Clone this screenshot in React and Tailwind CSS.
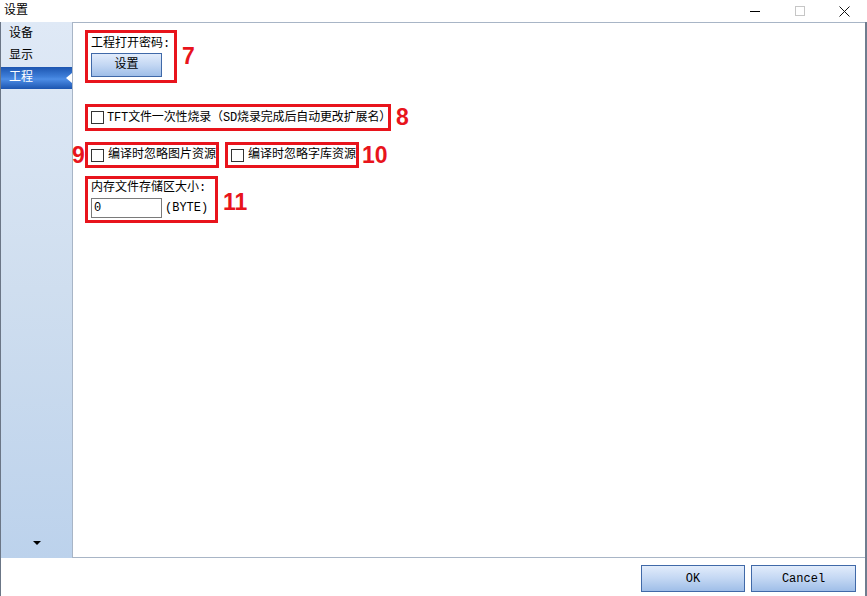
import React from "react";

const FONT = { fontFamily: '"Liberation Mono", "Noto Sans CJK SC", monospace' };

const NavItem = ({ label, active }) => {
  if (active) {
    return (
      <div className="relative h-[22px] flex items-center pl-[8px] text-white bg-[linear-gradient(180deg,#1c55b0_0%,#3f7fda_45%,#4d8de6_55%,#1c55b0_100%)]">
        {label}
        <div className="absolute right-0 top-[6px] w-0 h-0 border-y-[5px] border-y-transparent border-r-[6px] border-r-white" />
      </div>
    );
  }
  return <div className="h-[22px] flex items-center pl-[8px] text-black">{label}</div>;
};

const RedNum = ({ children, className = "" }) => (
  <span
    className={`text-[#e8141c] font-bold text-[23px] leading-none ${className}`}
    style={{ fontFamily: '"Liberation Sans", sans-serif' }}
  >
    {children}
  </span>
);

const Check = () => (
  <span className="inline-block w-[13px] h-[13px] border border-[#333] bg-white shrink-0" />
);

const BlueButton = ({ children, className = "" }) => (
  <button className={`border border-[#4069a8] bg-[linear-gradient(180deg,#e2ecfb_0%,#c3d7f3_50%,#9fbee8_100%)] text-black text-[12px] ${className}`}>
    {children}
  </button>
);

export default function App() {
  return (
    <div className="w-[867px] h-[596px] bg-white flex flex-col text-[12px] text-black overflow-hidden" style={FONT}>
      {/* title bar */}
      <div className="h-[22px] flex items-center shrink-0">
        <span className="pl-[4px] text-[12px]">设置</span>
        <div className="ml-auto flex items-center h-full">
          <div className="w-[45px] h-full flex items-center justify-center">
            <span className="block w-[10px] h-px bg-black" />
          </div>
          <div className="w-[45px] h-full flex items-center justify-center">
            <span className="block w-[10px] h-[10px] border border-[#c6c6c6]" />
          </div>
          <div className="w-[45px] h-full flex items-center justify-center">
            <svg width="11" height="11" viewBox="0 0 11 11">
              <path d="M0.5 0.5 L10.5 10.5 M10.5 0.5 L0.5 10.5" stroke="#111" strokeWidth="1" />
            </svg>
          </div>
        </div>
      </div>

      {/* body */}
      <div className="flex-1 flex flex-col border-l border-l-[#6b7686] border-r-2 border-r-[#6f7d8f]">
        <div className="flex-1 flex">
          {/* sidebar */}
          <div className="w-[71px] flex flex-col pt-[1px] bg-[linear-gradient(180deg,#dfe9f6_0%,#cfdeef_50%,#bcd2ec_100%)]">
            <NavItem label="设备" />
            <NavItem label="显示" />
            <NavItem label="工程" active />
            <div className="mt-auto h-[20px] flex items-start justify-center">
              <span className="block w-0 h-0 border-x-[4px] border-x-transparent border-t-[4px] border-t-black mt-[3px]" />
            </div>
          </div>

          {/* content panel */}
          <div className="flex-1 border-l border-t border-b border-[#a8b5c6] bg-white pl-[12px] pt-[7px] flex flex-col">
            {/* 7 */}
            <div className="flex items-start">
              <div className="w-[92px] h-[53px] border-[3px] border-[#e8141c] pl-[3px] pt-[4px] flex flex-col">
                <span className="leading-[14px]">工程打开密码:</span>
                <BlueButton className="mt-[2px] w-[71px] h-[24px]">设置</BlueButton>
              </div>
              <RedNum className="ml-[5px] mt-[15px]">7</RedNum>
            </div>

            {/* 8 */}
            <div className="flex items-center mt-[21px]">
              <div className="w-[306px] h-[27px] border-[3px] border-[#e8141c] flex items-center pl-[3px] gap-[3px]">
                <Check />
                <span className="whitespace-nowrap leading-[14px] tracking-[-0.15px]">TFT文件一次性烧录（SD烧录完成后自动更改扩展名）</span>
              </div>
              <RedNum className="ml-[5px]">8</RedNum>
            </div>

            {/* 9 / 10 */}
            <div className="flex items-center mt-[11px] ml-[-13px]">
              <RedNum className="w-[13px]">9</RedNum>
              <div className="w-[134px] h-[26px] border-[3px] border-[#e8141c] flex items-center pl-[3px] gap-[4px]">
                <Check />
                <span className="whitespace-nowrap leading-[14px]">编译时忽略图片资源</span>
              </div>
              <div className="ml-[6px] w-[134px] h-[26px] border-[3px] border-[#e8141c] flex items-center pl-[3px] gap-[4px]">
                <Check />
                <span className="whitespace-nowrap leading-[14px]">编译时忽略字库资源</span>
              </div>
              <RedNum className="ml-[3px]">10</RedNum>
            </div>

            {/* 11 */}
            <div className="flex items-start mt-[8px]">
              <div className="w-[133px] h-[47px] border-[3px] border-[#e8141c] pl-[3px] pt-[2px] flex flex-col">
                <span className="leading-[14px] whitespace-nowrap">内存文件存储区大小:</span>
                <div className="flex items-center mt-[3px]">
                  <div className="w-[71px] h-[20px] border border-[#7a7a7a] bg-white flex items-center pl-[2px] leading-none">0</div>
                  <span className="ml-[3px]">(BYTE)</span>
                </div>
              </div>
              <RedNum className="ml-[5px] mt-[15px]">11</RedNum>
            </div>
          </div>
        </div>

        {/* footer */}
        <div className="h-[38px] shrink-0 flex items-start justify-end gap-[6px] pt-[7px] pr-[9px]">
          <BlueButton className="w-[104px] h-[27px]">OK</BlueButton>
          <BlueButton className="w-[105px] h-[27px]">Cancel</BlueButton>
        </div>
      </div>
    </div>
  );
}
